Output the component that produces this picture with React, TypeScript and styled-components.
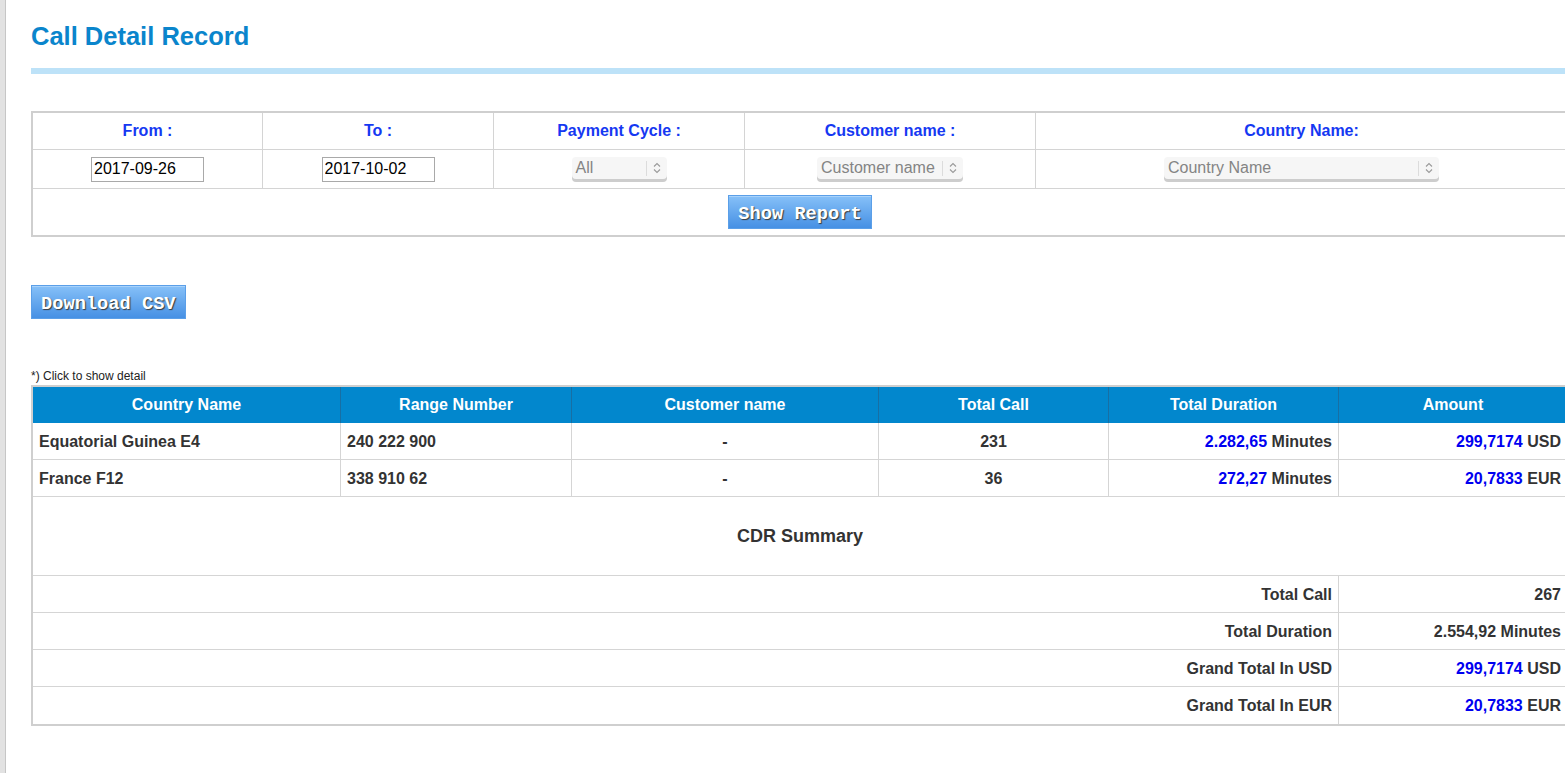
import React from "react";
import styled, { createGlobalStyle } from "styled-components";

const GlobalStyle = createGlobalStyle`
  html, body { margin: 0; padding: 0; background: #fff; overflow: hidden; }
  body { font-family: "Liberation Sans", Arial, sans-serif; }
  * { box-sizing: border-box; }
`;

const Page = styled.div`
  min-height: 100vh;
  border-left: 5px solid #e2e2e2;
  box-shadow: inset 1px 0 0 #c6c6c6;
  padding: 21px 0 40px 26px;
`;

const Content = styled.div`
  width: 1538px;
`;

const Title = styled.h1`
  margin: 0;
  font-size: 25.5px;
  line-height: 30px;
  font-weight: bold;
  color: #0a85cc;
`;

const TitleBar = styled.div`
  margin-top: 17px;
  height: 6px;
  background: #bde2f8;
`;

const FilterPanel = styled.div`
  margin-top: 37px;
  border: 2px solid #cfcfcf;
  display: grid;
  grid-template-columns: 230px 231px 251px 291px 1fr;
`;

const FilterHead = styled.div<{ $last?: boolean }>`
  height: 37px;
  display: flex;
  align-items: center;
  justify-content: center;
  border-bottom: 1px solid #d4d4d4;
  border-right: ${(p) => (p.$last ? "none" : "1px solid #d4d4d4")};
  color: #1538f2;
  font-size: 16px;
  font-weight: bold;
`;

const FilterField = styled.div<{ $last?: boolean }>`
  height: 39px;
  display: flex;
  align-items: center;
  justify-content: center;
  border-bottom: 1px solid #d4d4d4;
  border-right: ${(p) => (p.$last ? "none" : "1px solid #d4d4d4")};
`;

const ButtonRow = styled.div`
  grid-column: 1 / -1;
  height: 46px;
  display: flex;
  align-items: center;
  justify-content: center;
`;

const DateInput = styled.input`
  width: 113px;
  height: 25px;
  border: 1px solid #a9a9a9;
  padding: 1px 2px;
  font-family: "Liberation Sans", Arial, sans-serif;
  font-size: 16px;
  color: #000;
  background: #fff;
  outline: none;
`;

const SelectBox = styled.div<{ $width: number }>`
  width: ${(p) => p.$width}px;
  height: 22px;
  margin-top: -2px;
  display: flex;
  align-items: center;
  background: #f6f6f6;
  border-radius: 4px;
  box-shadow: 0 3px 0 #cdcdcd;
  color: #848484;
  font-size: 16px;
  cursor: default;
`;

const SelectLabel = styled.span`
  flex: 1;
  min-width: 0;
  overflow: hidden;
  white-space: nowrap;
  padding-left: 4px;
  line-height: 22px;
`;

const SelectDivider = styled.span`
  width: 1px;
  height: 15px;
  background: #dcdcdc;
`;

const SelectArrow = styled.span`
  width: 20px;
  display: flex;
  align-items: center;
  justify-content: center;
`;

const ActionButton = styled.button`
  height: 34px;
  padding: 4px 9px 0;
  border: 1px solid #5b9fe8;
  background: linear-gradient(#86c0f8, #4690e4);
  box-shadow: inset 0 1px 0 #a8d2fb;
  color: #fff;
  font-family: "Liberation Mono", "Courier New", monospace;
  font-weight: bold;
  font-size: 18.7px;
  text-shadow: 1px 1px 1px #3a3a3a;
  cursor: pointer;
`;

const CsvBlock = styled.div`
  margin-top: 48px;
  display: flex;
`;

const Note = styled.div`
  margin-top: 50px;
  padding-bottom: 2px;
  font-size: 12px;
  line-height: 14px;
  color: #222;
`;

const DataTable = styled.div`
  border: 2px solid #cfcfcf;
  display: grid;
  grid-template-columns: 308px 231px 307px 230px 230px 1fr;
  & > *:nth-last-child(-n + 2) {
    border-bottom: none;
  }
`;

const HeadCell = styled.div<{ $last?: boolean }>`
  height: 36px;
  line-height: 36px;
  text-align: center;
  background: #0287cd;
  color: #fff;
  font-size: 16px;
  font-weight: bold;
  border-right: ${(p) => (p.$last ? "none" : "1px solid #176fa4")};
`;

type Align = "left" | "center" | "right";

const Cell = styled.div<{ $align?: Align; $last?: boolean; $span?: string }>`
  height: 37px;
  padding: 1px 6px 0;
  line-height: 36px;
  text-align: ${(p) => p.$align || "left"};
  grid-column: ${(p) => p.$span || "auto"};
  border-bottom: 1px solid #d5d5d5;
  border-right: ${(p) => (p.$last ? "none" : "1px solid #d5d5d5")};
  color: #333;
  font-size: 16px;
  font-weight: bold;
  white-space: nowrap;
`;

const SummaryTitle = styled.div`
  grid-column: 1 / -1;
  height: 79px;
  display: flex;
  align-items: center;
  justify-content: center;
  border-bottom: 1px solid #d5d5d5;
  color: #333;
  font-size: 18px;
  font-weight: bold;
`;

const Num = styled.span`
  color: #0000f0;
`;

const Chevrons = () => (
  <svg width="8" height="14" viewBox="0 0 8 14" fill="none" stroke="#9a9a9a" strokeWidth="1.1">
    <polyline points="1,5.5 4,2.5 7,5.5" />
    <polyline points="1,8.5 4,11.5 7,8.5" />
  </svg>
);

const FakeSelect = ({ label, width }: { label: string; width: number }) => (
  <SelectBox $width={width}>
    <SelectLabel>{label}</SelectLabel>
    <SelectDivider />
    <SelectArrow>
      <Chevrons />
    </SelectArrow>
  </SelectBox>
);

const rows = [
  { country: "Equatorial Guinea E4", range: "240 222 900", customer: "-", calls: "231", dur: "2.282,65", amount: "299,7174", cur: "USD" },
  { country: "France F12", range: "338 910 62", customer: "-", calls: "36", dur: "272,27", amount: "20,7833", cur: "EUR" },
];

export default function App() {
  return (
    <>
      <GlobalStyle />
      <Page>
        <Content>
          <Title>Call Detail Record</Title>
          <TitleBar />

          <FilterPanel>
            <FilterHead>From :</FilterHead>
            <FilterHead>To :</FilterHead>
            <FilterHead>Payment Cycle :</FilterHead>
            <FilterHead>Customer name :</FilterHead>
            <FilterHead $last>Country Name:</FilterHead>

            <FilterField>
              <DateInput defaultValue="2017-09-26" />
            </FilterField>
            <FilterField>
              <DateInput defaultValue="2017-10-02" />
            </FilterField>
            <FilterField>
              <FakeSelect label="All" width={95} />
            </FilterField>
            <FilterField>
              <FakeSelect label="Customer name" width={146} />
            </FilterField>
            <FilterField $last>
              <FakeSelect label="Country Name" width={275} />
            </FilterField>

            <ButtonRow>
              <ActionButton>Show Report</ActionButton>
            </ButtonRow>
          </FilterPanel>

          <CsvBlock>
            <ActionButton>Download CSV</ActionButton>
          </CsvBlock>

          <Note>*) Click to show detail</Note>

          <DataTable>
            <HeadCell>Country Name</HeadCell>
            <HeadCell>Range Number</HeadCell>
            <HeadCell>Customer name</HeadCell>
            <HeadCell>Total Call</HeadCell>
            <HeadCell>Total Duration</HeadCell>
            <HeadCell $last>Amount</HeadCell>

            {rows.map((r) => (
              <React.Fragment key={r.country}>
                <Cell>{r.country}</Cell>
                <Cell>{r.range}</Cell>
                <Cell $align="center">{r.customer}</Cell>
                <Cell $align="center">{r.calls}</Cell>
                <Cell $align="right">
                  <Num>{r.dur}</Num> Minutes
                </Cell>
                <Cell $align="right" $last>
                  <Num>{r.amount}</Num> {r.cur}
                </Cell>
              </React.Fragment>
            ))}

            <SummaryTitle>CDR Summary</SummaryTitle>

            <Cell $align="right" $span="1 / 6">Total Call</Cell>
            <Cell $align="right" $last>267</Cell>
            <Cell $align="right" $span="1 / 6">Total Duration</Cell>
            <Cell $align="right" $last>2.554,92 Minutes</Cell>
            <Cell $align="right" $span="1 / 6">Grand Total In USD</Cell>
            <Cell $align="right" $last>
              <Num>299,7174</Num> USD
            </Cell>
            <Cell $align="right" $span="1 / 6">Grand Total In EUR</Cell>
            <Cell $align="right" $last>
              <Num>20,7833</Num> EUR
            </Cell>
          </DataTable>
        </Content>
      </Page>
    </>
  );
}
